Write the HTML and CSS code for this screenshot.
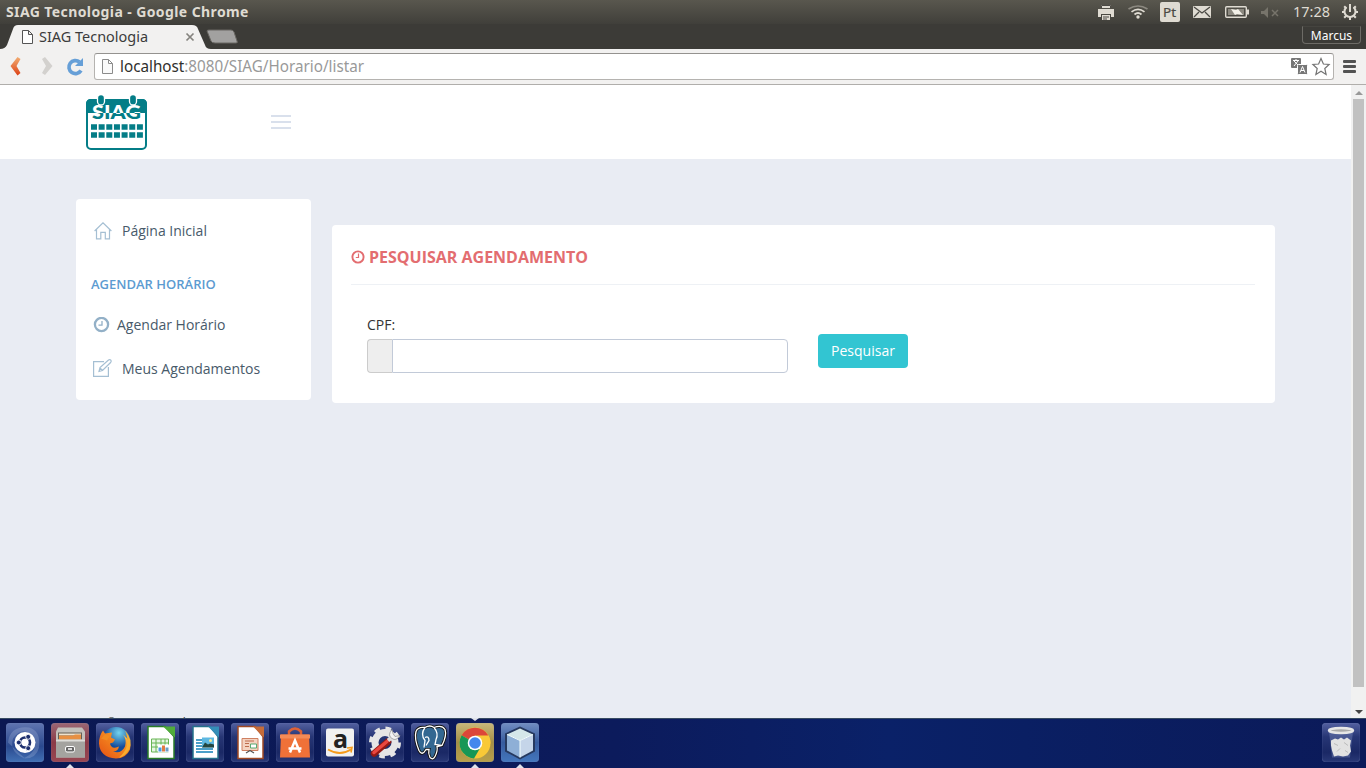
FILE: index.html
```html
<!DOCTYPE html>
<html lang="pt">
<head>
<meta charset="utf-8">
<title>SIAG Tecnologia</title>
<link rel="stylesheet" href="styles.css">
</head>
<body>
<div class="screen">
  <header class="panel">
    <div class="panel-title">SIAG Tecnologia - Google Chrome</div>
    <svg class="tray" width="276" height="24" viewBox="1090 0 276 24">
      <g fill="#dfdbd2">
        <path d="M1101 5h10v3h-10zM1098 9h16v8h-3v-3h-10v3h-3z"/><path d="M1102 15h8v5h-8z"/><path d="M1103 17h6M1103 19h4" stroke="#4b4944"/>
        <rect x="1160" y="2" width="20" height="20" rx="2"/>
        <rect x="1193" y="6" width="18" height="12" rx="1"/>
        <circle cx="1138" cy="17" r="1.7"/>
      </g>
      <path d="M1101.500 8v-2.500h9V8" fill="none" stroke="#4b4944"/>
      <path d="M1194 7l8 6 8-6M1194 17l5-5M1210 17l-5-5" fill="none" stroke="#4b4944" stroke-width="1.3"/>
      <g fill="none" stroke="#dfdbd2" stroke-width="1.7">
        <path d="M1134.500 14.500q3.500-3 7 0"/><path d="M1131.500 11.800q6.500-5 13 0"/><path d="M1128.500 9q9.500-6 19 0" stroke="#8c8980"/>
        <rect x="1225.700" y="6.700" width="20.600" height="10.600" rx="1" stroke-width="1.4"/><path d="M1248 9.500v5" stroke-width="2"/>
        <path d="M1346.500 7.200a5.500 5.500 0 1 0 7 0" stroke-width="2"/><path d="M1350 4v8" stroke-width="2"/>
        <path d="M1350 17v3M1342 12h2.500M1355.500 12h2.500M1344.200 6.200l2 2M1355.800 6.200l-2 2M1344.200 17.800l2-2M1355.800 17.800l-2-2" stroke-width="2"/>
      </g>
      <rect x="1228" y="9" width="16" height="6" fill="#8c8980"/>
      <path d="M1231 9l5 1 2-1 5 6-6-1-2 1z" fill="#f2efe7"/>
      <path d="M1261 11h3l4-4v11l-4-4h-3z" fill="#77746b"/><path d="M1272 10l6 6M1278 10l-6 6" stroke="#77746b" stroke-width="1.500"/>
      <text class="lang" x="1163" y="17" textLength="13" lengthAdjust="spacingAndGlyphs">Pt</text>
      <text class="clock" x="1293" y="17" textLength="37" lengthAdjust="spacingAndGlyphs">17:28</text>
    </svg>
  </header>

  <div class="tabstrip">
    <svg class="tab-shape" width="245" height="25" viewBox="0 0 245 25">
      <path d="M0 25q5 0 7-4l6-16q1-4 5-4h174q5 0 6 4l7 16q1 4 6 4z" fill="#f2f1f0"/>
      <path d="M207 7q0-1 2-1h22q2 0 3 2l3 9q1 2-1 2h-21q-3 0-4-2z" fill="#a2a1a0" stroke="#696762"/>
      <path d="M22.500 6.500h6l4 4v9h-10zM28.500 6.500v4h4" fill="#fff" stroke="#555"/>
      <path d="M186.500 9.500l7 7M193.500 9.500l-7 7" stroke="#85837f" stroke-width="1.700"/>
      <text class="tab-text" x="39" y="18" textLength="109" lengthAdjust="spacingAndGlyphs">SIAG Tecnologia</text>
    </svg>
    <div class="profile">Marcus</div>
  </div>

  <div class="toolbar">
    <svg width="94" height="35" viewBox="0 49 94 35">
      <defs><linearGradient id="back" x2="0" y2="1"><stop stop-color="#f2ad72"/><stop offset="1" stop-color="#dc4115"/></linearGradient></defs>
      <path d="M10.500 66l7-9 3 2-4 7 4 7-3 2.500z" fill="url(#back)"/>
      <path d="M42 59l3-2 7.500 9-7.500 9-3-2 4-7z" fill="#d3d1ce"/>
      <path d="M79.500 62a6.500 6.500 0 1 0 1.500 8.500" fill="none" stroke="#669fd7" stroke-width="3.700"/><path d="M83 58v8h-8z" fill="#669fd7"/>
    </svg>
    <div class="omnibox">
      <svg width="12" height="18" viewBox="0 0 12 18"><path d="M.5 1.500h6l4 4v10h-10zM6.500 1.500v4h4" fill="#fafafa" stroke="#8b8b8b"/></svg>
      <svg class="url" width="260" height="25"><text class="url-text" x="0" y="18" textLength="244" lengthAdjust="spacingAndGlyphs"><tspan fill="#302f2d">localhost</tspan>:8080/SIAG/Horario/listar</text></svg>
      <svg class="omni-icons" width="42" height="22" viewBox="1290 56 42 22">
        <rect x="1291" y="58" width="10" height="10" rx="1" fill="#777"/><rect x="1297.500" y="64.500" width="10" height="10" rx="1" fill="#777" stroke="#fff"/>
        <path d="M1293 60.500h6M1296 59v2M1294 66l4-5M1294 61l4 4M1300 72.500l2.500-6 2.500 6M1301 70.500h3" fill="none" stroke="#fff"/>
        <path d="M1321 58.500l2.400 5.500 5.700.500-4.300 4 1.300 6-5.100-3.200-5.100 3.200 1.300-6-4.300-4 5.700-.500z" fill="#fff" stroke="#747474" stroke-width="1.200"/>
      </svg>
    </div>
    <div class="menu-bars"><i></i><i></i><i></i></div>
  </div>

  <div class="viewport">
    <div class="page">
      <div class="page-header">
        <svg class="logo" width="62" height="56" viewBox="86 95 62 56">
          <defs><clipPath id="top"><path d="M86 95h62v18H86z"/></clipPath><clipPath id="low"><path d="M86 113h62v8H86z"/></clipPath></defs>
          <rect x="87" y="100" width="59" height="49" rx="4" fill="#fff" stroke="#047d87" stroke-width="2"/>
          <path d="M86 113v-9q0-5 5-5h51q5 0 5 5v9z" fill="#047d87"/>
          <text class="logo-text" x="92" y="118.500" textLength="49" lengthAdjust="spacingAndGlyphs" fill="#fff" clip-path="url(#top)">SIAG</text>
          <text class="logo-text" x="92" y="118.500" textLength="49" lengthAdjust="spacingAndGlyphs" fill="#047d87" clip-path="url(#low)">SIAG</text>
          <g fill="#047d87" stroke="#fff" stroke-width="1.300"><rect x="97.500" y="94.500" width="7" height="10.500" rx="3.500"/><rect x="129.500" y="94.500" width="7" height="10.500" rx="3.500"/></g>
          <path d="M91 127h53M91 135h53" stroke="#047d87" stroke-width="5.600" stroke-dasharray="6 1.650"/>
        </svg>
        <div class="toggler"><i></i><i></i><i></i></div>
      </div>
      <div class="content">
        <nav class="sidebar">
          <a class="nav-item"><svg width="18" height="18" viewBox="0 0 18 18"><path d="M.6 9L9 .8 17.400 9M2.500 7.500v9.400h4.300v-6.600h4.500v6.600h4.200V7.500" fill="none" stroke="#a5bfd3" stroke-width="1.200"/></svg><span>Página Inicial</span></a>
          <h3>AGENDAR HORÁRIO</h3>
          <a class="nav-item near"><svg width="17" height="17" viewBox="0 0 17 17"><circle cx="8.500" cy="7.500" r="6.600" fill="none" stroke="#93b0c7" stroke-width="2.300"/><path d="M9 4v4.200H5.500" fill="none" stroke="#93b0c7" stroke-width="1.300"/></svg><span>Agendar Horário</span></a>
          <a class="nav-item"><svg width="20" height="20" viewBox="0 0 20 20"><path d="M11 2.600H.6v14.800h14.800V8M6 12.500l1-4L15.500 1q1.500-.8 2.300.2t-.2 2.300L9.500 11.500zM7 9l2.500 2.500" fill="none" stroke="#a5bfd3" stroke-width="1.200"/></svg><span>Meus Agendamentos</span></a>
        </nav>
        <main class="card">
          <h2><svg width="14" height="14" viewBox="0 0 14 14"><circle cx="7" cy="7" r="5.600" fill="none" stroke="#e36d70" stroke-width="1.900"/><path d="M7.500 3.500v4H4.800" fill="none" stroke="#e36d70" stroke-width="1.200"/></svg><span>PESQUISAR AGENDAMENTO</span></h2>
          <div class="form">
            <div class="field">
              <label for="cpf">CPF:</label>
              <div class="input-group"><span class="addon"></span><input id="cpf" type="text"></div>
            </div>
            <button type="button">Pesquisar</button>
          </div>
        </main>
      </div>
      <footer>2016 © SIAG Tecnologia</footer>
    </div>
    <div class="scrollbar"><b class="up"></b><div class="thumb"></div><b class="down"></b></div>
  </div>

  <div class="launcher">
    <div class="tile dash"><svg viewBox="0 0 38 38"><path d="M2 19Q4 2 23 4q12 3 10 20-3 12-16 11Q33 28 28 14 17 1 7 15 3 29 19 35" fill="#b9c8e840"/><circle cx="19" cy="19" r="10.500" fill="#fff"/><circle cx="19" cy="19" r="5" fill="none" stroke="#1d2f6e" stroke-width="2.600"/><g fill="#1d2f6e" stroke="#fff" stroke-width=".9"><circle cx="12.800" cy="19" r="2.500"/><circle cx="22.200" cy="13.300" r="2.500"/><circle cx="22.200" cy="24.700" r="2.500"/></g></svg></div>
    <div class="tile files"><svg viewBox="0 0 38 38"><path d="M7 4h24l3 4v26H5V8z" fill="#c3c1bb"/><path d="M7 9h24v8H7z" fill="#655f55"/><path d="M8 10h22v2H8z" fill="#eee2cd"/><path d="M8 12h14l2-1h6v6H8z" fill="#e79043"/><path d="M5 16h29v18H5z" fill="#a4a39f"/><path d="M5 16h29v2H5z" fill="#dddcd8"/><rect x="14.500" y="23" width="9" height="5.500" rx="1.500" fill="#666" stroke="#fff"/><path d="M17 25.500h4" stroke="#fff" stroke-width="1.500"/></svg></div>
    <div class="tile"><svg viewBox="0 0 38 38"><defs><radialGradient id="globe" cx=".6" cy=".2"><stop stop-color="#73d4ee"/><stop offset="1" stop-color="#154c9b"/></radialGradient><linearGradient id="fox" x1="0" y1="1" x2="1" y2="0"><stop stop-color="#e54f13"/><stop offset=".65" stop-color="#f58e20"/><stop offset="1" stop-color="#ffe36c"/></linearGradient></defs><circle cx="20" cy="18" r="14.500" fill="url(#globe)"/><path d="M7 7l2 3 7-1-1 5 4 2-2 3-3 1q1 5 6 4l3-1q-1 5-6 5 8 3 12-5 2-7-2-12 9 7 7 15-4 9-14 9Q4 34 3 20q0-8 4-13z" fill="url(#fox)"/><path d="M5 15l4-4 5 1-3 5z" fill="#f18b20"/><path d="M29 7q9 10 4 19-4 7-10 8 13-11 6-27z" fill="#f9ae2e"/></svg></div>
    <div class="tile"><svg viewBox="0 0 38 38"><path d="M7 3h17l9 10v22H7z" fill="#fff" stroke="#287c28" stroke-width="1.500"/><path d="M22 3h12v11z" fill="#50ac3a"/><path d="M10.500 15.500h17v13h-17zM10.500 19.500h17M10.500 23.500h17M15 15.500v13M20 15.500v13M24 15.500v13" fill="#e7f6e3" stroke="#66b453"/><path d="M17 21h11v8H17z" fill="#fff"/><path d="M19 28v-4" stroke="#4b9be0" stroke-width="3"/><path d="M22.500 28v-6" stroke="#e07b42" stroke-width="3"/><path d="M26 28v-4" stroke="#6b9ec6" stroke-width="3"/></svg></div>
    <div class="tile"><svg viewBox="0 0 38 38"><path d="M7 3h17l8 10v22H7z" fill="#fff" stroke="#25718b" stroke-width="1.500"/><path d="M22 3h11v11z" fill="#348eb8"/><path d="M10 16.500h15M10 19.500h15M10 22.500h15M10 25.500h17M10 28.500h17" stroke="#4b9fc9" stroke-width="1.800"/><path d="M16 14h12v10H16z" fill="#5eb8e1"/><path d="M16 24l3-5 3 2 2-1 4 1v3z" fill="#24463f"/><circle cx="24.500" cy="17" r="1.500" fill="#f4e892"/></svg></div>
    <div class="tile"><svg viewBox="0 0 38 38"><path d="M7 3h17l8 10v22H7z" fill="#fff" stroke="#a04a24" stroke-width="1.500"/><path d="M22 3h11v11z" fill="#c66c39"/><path d="M11 15h16v12H11z" fill="#f4d2c0" stroke="#cf8061"/><path d="M14 17.500h9M14 20h4M14 23h4" stroke="#bd6b4c"/><path d="M19.500 20.500h6v4h-6z" fill="#fff" stroke="#59aa73"/><path d="M19 27l-4 2.500M19 27l4 2.500" fill="none" stroke="#555" stroke-width="1.200"/></svg></div>
    <div class="tile"><svg viewBox="0 0 38 38"><path d="M13 14V8q6-6 12 0v6" fill="none" stroke="#dd6137" stroke-width="2.500"/><path d="M5 11h28l1 23H4z" fill="#ef7138"/><path d="M4 11h30v4H4z" fill="#f58b57"/><path d="M14 29l5-12 5 12M12.500 25h13" fill="none" stroke="#fff" stroke-width="2.500"/></svg></div>
    <div class="tile"><svg viewBox="0 0 38 38"><rect x="5" y="5" width="28" height="28" rx="2" fill="#f1f1f1"/><text class="amazon" x="12" y="24">a</text><path d="M7 26q12 7 23 0" fill="none" stroke="#f59b1b" stroke-width="2"/><path d="M26 24.500l5-.5-1 5" fill="none" stroke="#f59b1b" stroke-width="1.600"/></svg></div>
    <div class="tile"><svg viewBox="0 0 38 38"><circle cx="19" cy="19" r="10" fill="none" stroke="#e6e6e6" stroke-width="7"/><circle cx="19" cy="19" r="14" fill="none" stroke="#e6e6e6" stroke-width="4" stroke-dasharray="5.500 5.500"/><path d="M8 30L22 18" stroke="#941914" stroke-width="6.500" stroke-linecap="round"/><path d="M8 29L21 18" stroke="#e94740" stroke-width="3.500" stroke-linecap="round"/><path d="M22 17l6-5" stroke="#ddd" stroke-width="4"/><path d="M26 6q-5 6 0 9 4 3 8-3l-5 1-2-3z" fill="#f3f3f3" stroke="#888" stroke-width=".7"/></svg></div>
    <div class="tile"><svg viewBox="0 0 38 38"><path d="M5 8q2-5 9-4 5-3 9 0 8-3 11 2 2 6-3 16l-5 1q1 4-2 10-2 4-5 1-2-4-1-8h-3q-4 7-7 1Q3 15 5 8z" fill="#336791" stroke="#111" stroke-width="3"/><path d="M5 8q2-5 9-4 5-3 9 0 8-3 11 2 2 6-3 16l-5 1q1 4-2 10-2 4-5 1-2-4-1-8h-3q-4 7-7 1Q3 15 5 8zM14 4q-5 7 0 13l-1 7M23 4q5 6 2 12l-1 5 7 1M14 14q4-2 4 3l-3 5" fill="none" stroke="#fff" stroke-width="1.300"/></svg></div>
    <div class="tile chrome"><svg viewBox="0 0 38 38"><circle cx="19" cy="19.500" r="15.500" fill="#f9c937"/><path d="M19 19.500L5.600 11.700A15.500 15.500 0 0 1 32.400 12z" fill="#dc4739"/><path d="M5.600 11.700A15.500 15.500 0 0 0 18 35l7-12-6-3.500z" fill="#179756"/><path d="M19 12h13.500q2 4 2 8l-10 2z" fill="#f9c937"/><circle cx="19" cy="19.500" r="7.300" fill="#fff"/><circle cx="19" cy="19.500" r="5.800" fill="#4487ed"/></svg></div>
    <div class="tile cube"><svg viewBox="0 0 38 38"><path d="M19 3l15 7v18l-15 8-15-8V10z" fill="#26395f"/><path d="M19 5l13 6-13 6-13-6z" fill="#d5e8ea"/><path d="M6 11l13 6v17L6 27z" fill="#8eafd6"/><path d="M32 11l-13 6v17l13-7z" fill="#c5d5e9"/><path d="M19 17v17M6 11l13 6 13-6" fill="none" stroke="#f4ffff"/></svg></div>
    <div class="tile trash"><svg viewBox="0 0 38 38"><path d="M7 8h24l-3 26H10z" fill="#aebbe444"/><ellipse cx="19" cy="7" rx="12" ry="2.500" fill="#aaa" stroke="#e6e6e6" stroke-width="2.500"/><path d="M9 17l4-2 3 1 3-2 3 2 3-2 4 3-1 5 1 6-3 4-5 1-5-1-4 1-2-6-1-5z" fill="#e2e2e2"/><path d="M12 20l4 2M22 19l4 3M15 28l3-3M23 27l3 2" stroke="#bbb" fill="none"/></svg></div>
    <svg class="pips" width="1366" height="50"><path d="M66 50l4-4 4 4zM471 50l4-4 4 4zM516 50l4-4 4 4zM471 0l4 3 4-3z" fill="#dfe2ea"/></svg>
  </div>
</div>
</body>
</html>
```
FILE: styles.css
```css
* { box-sizing: border-box; }
body { margin: 0; font: 14px/20px "Open Sans", sans-serif; color: #333; }
.screen { width: 1366px; height: 768px; overflow: hidden; display: flex; flex-direction: column; }
.panel { height: 24px; flex: none; display: flex; justify-content: space-between; background: linear-gradient(#59574e, #403f3a); }
.panel-title { padding-left: 6px; font: bold 14px/23px "Noto Sans", sans-serif; color: #dfdbd2; letter-spacing: .4px; }
.lang { font: 13px "Noto Sans", sans-serif; fill: #4b4944; stroke: #4b4944; stroke-width: .2px; }
.clock { font: 14.5px "Noto Sans", sans-serif; fill: #dfdbd2; }
.tabstrip { height: 25px; flex: none; display: flex; justify-content: space-between; background: #3c3b37; }
.tab-text { font: 14px "Noto Sans", sans-serif; fill: #3b3b3b; }
.profile { width: 59px; height: 18px; margin: 2px 5px 0 0; border: 1px solid #6d6b66; border-top-color: #45443f; border-radius: 0 0 4px 4px; color: #fff; font: 12px/17px "Noto Sans", sans-serif; text-align: center; }
.toolbar { height: 36px; flex: none; display: flex; background: #f2f1f0; border-bottom: 1px solid #b0aeab; }
.omnibox { width: 1240px; height: 27px; margin-top: 4px; padding: 0 1px 0 7px; display: flex; align-items: center; background: #fff; border: 1px solid #b5b3b0; border-top-color: #94928f; border-radius: 3px; }
.url { margin-left: 6px; }
.url-text { font: 16px "Noto Sans", sans-serif; fill: #999; }
.omni-icons { margin-left: auto; }
.menu-bars { margin: 11px 0 0 9px; display: flex; flex-direction: column; gap: 2px; }
.menu-bars i { width: 13px; height: 3px; border-radius: 1px; background: #525252; }
.viewport { height: 633px; flex: none; display: flex; overflow: hidden; }
.page { width: 1351px; background: #e9ecf3; overflow: hidden; display: flex; flex-direction: column; }
.page-header { height: 74px; flex: none; background: #fff; display: flex; align-items: flex-start; padding: 10px 0 0 86px; }
.logo-text { font: 900 18px Lato, sans-serif; }
.toggler { margin: 20px 0 0 123px; display: flex; flex-direction: column; gap: 4px; }
.toggler i { width: 20px; height: 2px; background: #d9e0ec; }
.content { height: 555px; flex: none; padding: 40px 0 0 76px; display: flex; align-items: flex-start; gap: 21px; }
.sidebar { width: 235px; height: 201px; padding: 10px 0; background: #fff; border-radius: 4px; }
.nav-item { height: 44px; padding-left: 17px; display: flex; align-items: center; color: #485a6a; }
.nav-item svg { width: 20px; flex: none; }
.nav-item span { margin-left: 9px; }
.near svg { width: 17px; }
.near span { margin-left: 7px; }
.sidebar h3 { margin: 22px 0 9px 15px; font-size: 13px; line-height: 19px; font-weight: 600; color: #5c9bd1; }
.card { width: 943px; height: 178px; margin-top: 26px; padding: 12px 20px 0 19px; background: #fff; border-radius: 4px; }
.card h2 { height: 48px; margin: 0; padding-bottom: 8px; display: flex; align-items: center; gap: 4px; border-bottom: 1px solid #eef1f5; color: #e36d70; font-size: 16px; font-weight: 700; }
.form { display: flex; padding: 30px 0 0 16px; }
.field { width: 421px; }
.field label { display: block; height: 24px; }
.input-group { display: flex; height: 34px; }
.addon { width: 25px; background: #eee; border: 1px solid #ccc; border-right: 0; border-radius: 4px 0 0 4px; }
.input-group input { flex: 1; min-width: 0; border: 1px solid #c2cad8; border-radius: 0 4px 4px 0; outline: 0; }
.form button { width: 90px; height: 34px; margin: 19px 0 0 30px; padding: 0 0 2px; border: 0; border-radius: 4px; background: #32c5d2; color: #fff; font: 14px "Open Sans", sans-serif; }
footer { flex: none; padding-left: 76px; font-size: 12px; line-height: 18px; white-space: nowrap; }
.scrollbar { width: 15px; background: #f1f1f1; display: flex; flex-direction: column; align-items: center; }
.thumb { width: 11px; height: 588px; margin: 4px 0 23px; background: #c1c1c1; }
.up { margin-top: 6px; border: 4px solid transparent; border-top: 0; border-bottom-color: #999; }
.down { border: 4px solid transparent; border-bottom: 0; border-top-color: #444; }
.launcher { position: relative; height: 50px; flex: none; padding: 4px 6px 0; display: flex; gap: 7px; border-top: 1px solid #374b62; background: linear-gradient(90deg, #0b1852 0, #0c1b5c 45%, #0a2168 65%, #0a1f63 75%, #0b1a59 100%); }
.tile { width: 38px; height: 39px; border-radius: 4px; background: linear-gradient(#5360a0 0, #273675 35%, #1a2865 75%, #293876); box-shadow: inset 0 0 1px #8591bd; }
.tile svg { display: block; width: 38px; height: 39px; }
.dash { background: linear-gradient(#6075b0, #2a498f 60%, #4270b4); }
.files { background: linear-gradient(#9b6875, #8b3a47 50%, #984652); }
.chrome { background: linear-gradient(#c8b87a, #a48f46 50%, #b9a04a); }
.cube { background: linear-gradient(#728ec2, #365b9e 50%, #4477bd); }
.trash { margin-left: auto; }
.amazon { font: bold 25px "Open Sans", sans-serif; fill: #222; }
.pips { position: absolute; left: 0; top: -1px; }
```
